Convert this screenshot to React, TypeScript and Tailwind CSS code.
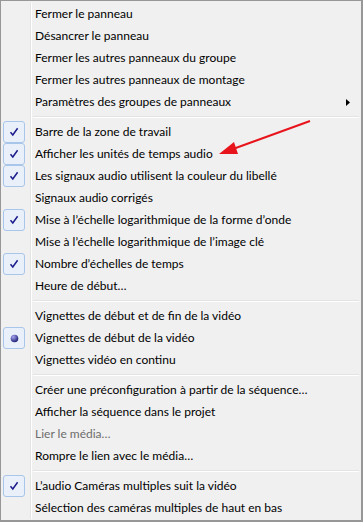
import React from "react";

type Item =
  | { kind: "sep" }
  | { kind: "item"; label: string; mark?: "check" | "radio"; disabled?: boolean; sub?: boolean };

const items: Item[] = [
  { kind: "item", label: "Fermer le panneau" },
  { kind: "item", label: "Désancrer le panneau" },
  { kind: "item", label: "Fermer les autres panneaux du groupe" },
  { kind: "item", label: "Fermer les autres panneaux de montage" },
  { kind: "item", label: "Paramètres des groupes de panneaux", sub: true },
  { kind: "sep" },
  { kind: "item", label: "Barre de la zone de travail", mark: "check" },
  { kind: "item", label: "Afficher les unités de temps audio", mark: "check" },
  { kind: "item", label: "Les signaux audio utilisent la couleur du libellé", mark: "check" },
  { kind: "item", label: "Signaux audio corrigés" },
  { kind: "item", label: "Mise à l’échelle logarithmique de la forme d’onde", mark: "check" },
  { kind: "item", label: "Mise à l’échelle logarithmique de l’image clé" },
  { kind: "item", label: "Nombre d’échelles de temps", mark: "check" },
  { kind: "item", label: "Heure de début…" },
  { kind: "sep" },
  { kind: "item", label: "Vignettes de début et de fin de la vidéo" },
  { kind: "item", label: "Vignettes de début de la vidéo", mark: "radio" },
  { kind: "item", label: "Vignettes vidéo en continu" },
  { kind: "sep" },
  { kind: "item", label: "Créer une préconfiguration à partir de la séquence…" },
  { kind: "item", label: "Afficher la séquence dans le projet" },
  { kind: "item", label: "Lier le média…", disabled: true },
  { kind: "item", label: "Rompre le lien avec le média…" },
  { kind: "sep" },
  { kind: "item", label: "L’audio Caméras multiples suit la vidéo", mark: "check" },
  { kind: "item", label: "Sélection des caméras multiples de haut en bas" },
];

function Gutter() {
  return <div className="w-[2px] self-stretch border-l border-l-[#e2e3e3] border-r border-r-white" />;
}

function Mark({ mark }: { mark?: "check" | "radio" }) {
  if (!mark) return <div className="w-[22px] h-[22px]" />;
  return (
    <div className="w-[22px] h-[22px] rounded-[3px] border border-[#a8c6ea] bg-[#eaf0f9] flex items-center justify-center">
      {mark === "check" ? (
        <svg width="10" height="10" viewBox="0 0 10 10">
          <path d="M1.5 5.2 L3.8 8 L8.6 1.2" fill="none" stroke="#1c1c8c" strokeWidth="1.5" />
        </svg>
      ) : (
        <svg width="9" height="9" viewBox="0 0 9 9">
          <defs>
            <radialGradient id="rg" cx="0.35" cy="0.3" r="0.7">
              <stop offset="0" stopColor="#a6a6f0" />
              <stop offset="1" stopColor="#23237a" />
            </radialGradient>
          </defs>
          <circle cx="4.5" cy="4.5" r="3.8" fill="url(#rg)" />
        </svg>
      )}
    </div>
  );
}

export default function App() {
  return (
    <div
      className="relative w-[363px] h-[522px] bg-[#f0f0f0] border-t border-l border-r-2 border-b-2 border-[#979797] pt-[2px] pl-[2px] pr-[2px] overflow-hidden text-[12px] text-[#000]"
      style={{ fontFamily: '"Segoe UI", Lato, "Noto Sans", sans-serif' }}
    >
      {items.map((it, i) =>
        it.kind === "sep" ? (
          <div key={i} className="flex h-[8px]">
            <div className="w-[27px]" />
            <Gutter />
            <div className="flex-1 flex flex-col justify-center ml-[1px]">
              <div className="h-px bg-[#e2e3e3]" />
              <div className="h-px bg-white" />
            </div>
          </div>
        ) : (
          <div key={i} className="flex h-[22px] items-center">
            <div className="w-[27px] h-full flex items-center">
              <Mark mark={it.mark} />
            </div>
            <Gutter />
            <div
              className={
                "flex-1 pl-[3px] whitespace-nowrap leading-[22px] " +
                (it.disabled ? "text-[#6d6d6d]" : "text-black")
              }
            >
              {it.label}
            </div>
            {it.sub && (
              <svg width="4" height="7" viewBox="0 0 4 7" className="mr-[9px]">
                <path d="M0 0 L4 3.5 L0 7 Z" fill="#000" />
              </svg>
            )}
          </div>
        )
      )}
      <svg className="absolute left-0 top-0 pointer-events-none" width="363" height="522">
        <line x1="309" y1="120" x2="232" y2="148" stroke="#e8141c" strokeWidth="2" />
        <path d="M218 153 L233 141 L237 153 Z" fill="#e8141c" />
      </svg>
    </div>
  );
}
